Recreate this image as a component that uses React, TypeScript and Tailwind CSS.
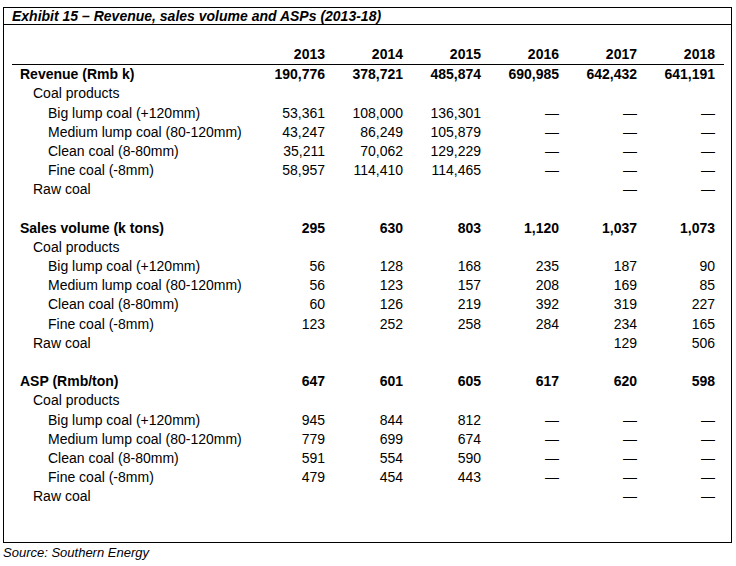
type Row = { label: string; level: 0 | 1 | 2; values: string[] } | null;

const D = '—';

const rows: Row[] = [
  { label: 'Revenue (Rmb k)', level: 0, values: ['190,776', '378,721', '485,874', '690,985', '642,432', '641,191'] },
  { label: 'Coal products', level: 1, values: [] },
  { label: 'Big lump coal (+120mm)', level: 2, values: ['53,361', '108,000', '136,301', D, D, D] },
  { label: 'Medium lump coal (80-120mm)', level: 2, values: ['43,247', '86,249', '105,879', D, D, D] },
  { label: 'Clean coal (8-80mm)', level: 2, values: ['35,211', '70,062', '129,229', D, D, D] },
  { label: 'Fine coal (-8mm)', level: 2, values: ['58,957', '114,410', '114,465', D, D, D] },
  { label: 'Raw coal', level: 1, values: ['', '', '', '', D, D] },
  null,
  { label: 'Sales volume (k tons)', level: 0, values: ['295', '630', '803', '1,120', '1,037', '1,073'] },
  { label: 'Coal products', level: 1, values: [] },
  { label: 'Big lump coal (+120mm)', level: 2, values: ['56', '128', '168', '235', '187', '90'] },
  { label: 'Medium lump coal (80-120mm)', level: 2, values: ['56', '123', '157', '208', '169', '85'] },
  { label: 'Clean coal (8-80mm)', level: 2, values: ['60', '126', '219', '392', '319', '227'] },
  { label: 'Fine coal (-8mm)', level: 2, values: ['123', '252', '258', '284', '234', '165'] },
  { label: 'Raw coal', level: 1, values: ['', '', '', '', '129', '506'] },
  null,
  { label: 'ASP (Rmb/ton)', level: 0, values: ['647', '601', '605', '617', '620', '598'] },
  { label: 'Coal products', level: 1, values: [] },
  { label: 'Big lump coal (+120mm)', level: 2, values: ['945', '844', '812', D, D, D] },
  { label: 'Medium lump coal (80-120mm)', level: 2, values: ['779', '699', '674', D, D, D] },
  { label: 'Clean coal (8-80mm)', level: 2, values: ['591', '554', '590', D, D, D] },
  { label: 'Fine coal (-8mm)', level: 2, values: ['479', '454', '443', D, D, D] },
  { label: 'Raw coal', level: 1, values: ['', '', '', '', D, D] },
];

const years = ['2013', '2014', '2015', '2016', '2017', '2018'];

function DataRow({ row }: { row: Row }) {
  if (!row) return <div className="h-[19.2px]" />;
  const bold = row.level === 0;
  const pad = row.level === 0 ? 'pl-[8px]' : row.level === 1 ? 'pl-[21px]' : 'pl-[36px]';
  return (
    <div className={`flex h-[19.2px] items-center leading-[19.2px] ${bold ? 'font-bold' : ''}`}>
      <div className={`w-[235px] ${pad}`}>{row.label}</div>
      {years.map((y, i) => (
        <div key={y} className="w-[78px] text-right">
          {row.values[i] ?? ''}
        </div>
      ))}
    </div>
  );
}

export default function App() {
  return (
    <div className="bg-white w-[736px] h-[566px] pl-[3px] pt-[7px] text-black font-['Liberation_Sans',Arial,sans-serif]">
      <div className="w-[729px] h-[536px] border border-black">
        <div className="h-[17px] border-b border-black pl-[8px] text-[14px] leading-[16px] font-bold italic">
          Exhibit 15 – Revenue, sales volume and ASPs (2013-18)
        </div>
        <div className="pl-[8px] pt-[20px] text-[14px]">
          <div className="w-[712px] border-b border-black">
            <div className="flex h-[19.2px] items-center leading-[19.2px] font-bold">
              <div className="w-[235px]" />
              {years.map((y) => (
                <div key={y} className="w-[78px] text-right">
                  {y}
                </div>
              ))}
            </div>
          </div>
          {rows.map((r, i) => (
            <DataRow key={i} row={r} />
          ))}
        </div>
      </div>
      <div className="pt-[2px] text-[13px] leading-[15px] italic">Source: Southern Energy</div>
    </div>
  );
}
